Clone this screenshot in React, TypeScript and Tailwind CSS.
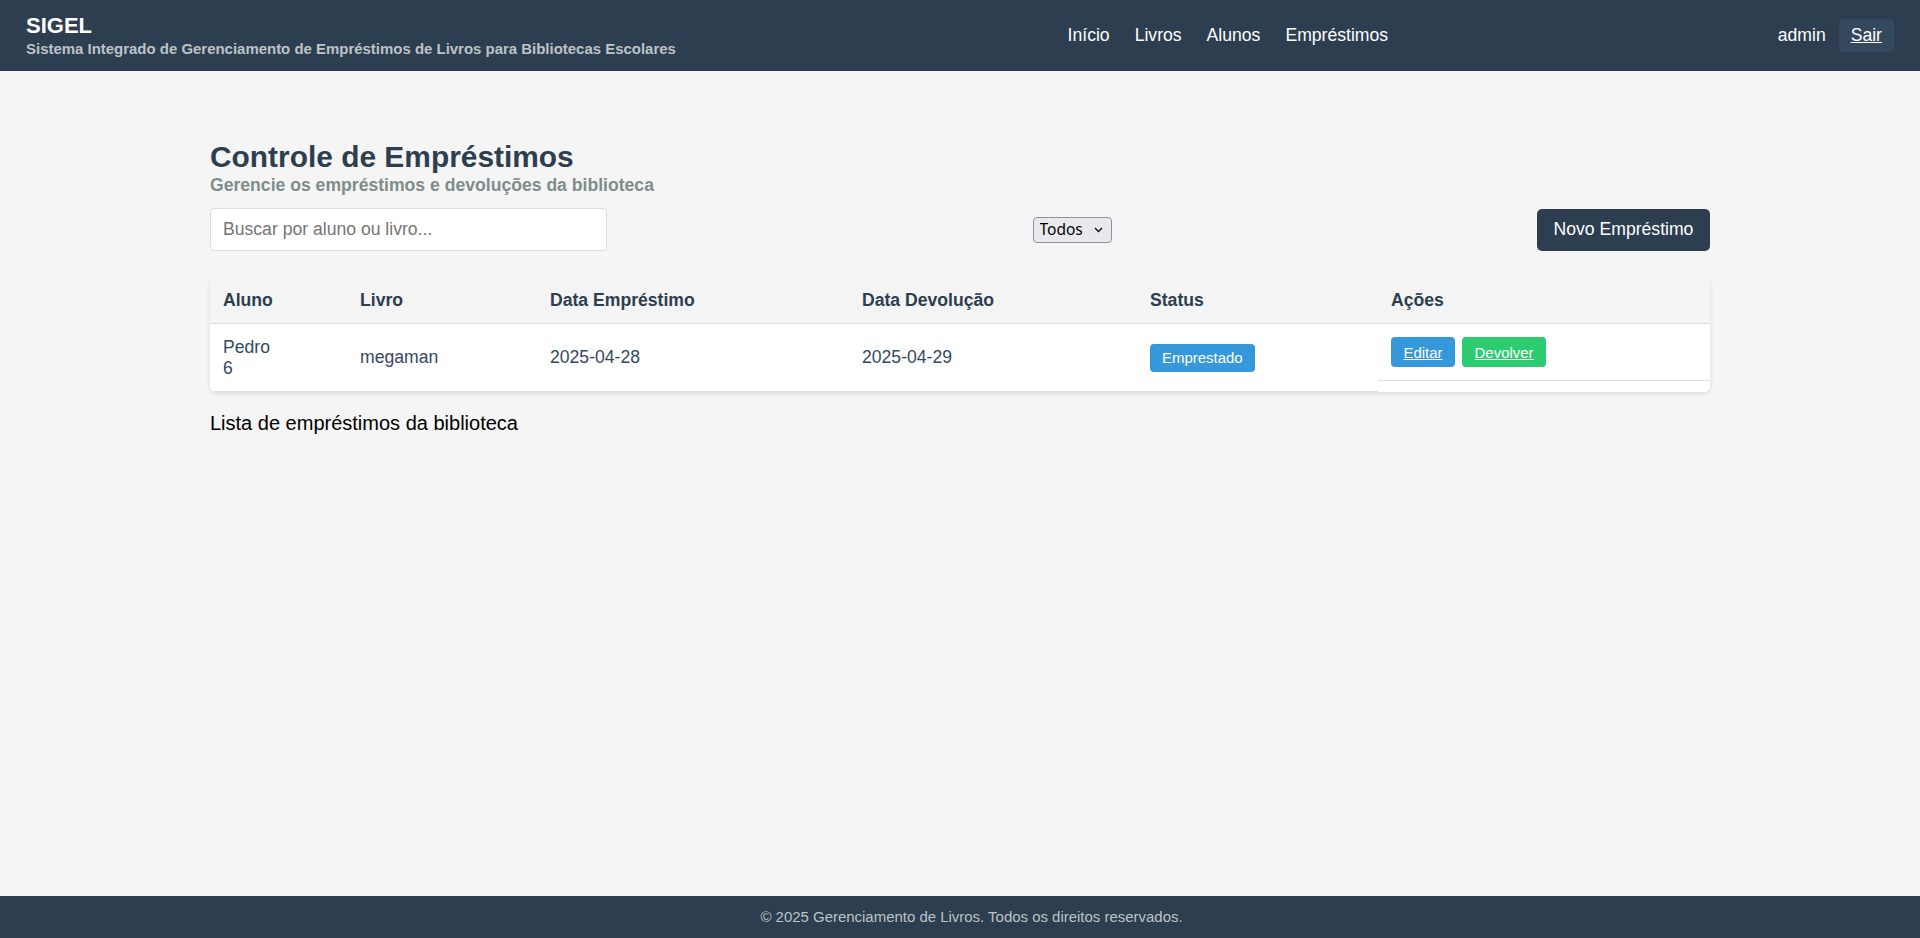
import React, { useState } from 'react';

interface Emprestimo {
  id: number;
  aluno: string;
  turma: string;
  livro: string;
  dataEmprestimo: string;
  dataDevolucao: string;
  status: string;
}

const emprestimos: Emprestimo[] = [
  {
    id: 1,
    aluno: 'Pedro',
    turma: '6',
    livro: 'megaman',
    dataEmprestimo: '2025-04-28',
    dataDevolucao: '2025-04-29',
    status: 'Emprestado',
  },
];

const Header: React.FC = () => (
  <header className="h-[71px] shrink-0 bg-[#2c3e50] px-[26px] flex items-center justify-between text-white">
    <div className="flex flex-col">
      <span className="text-[22px] leading-[26px] font-bold">SIGEL</span>
      <span className="mt-[1px] text-[14.96px] leading-[18px] font-bold text-[#bdc3c7]">
        Sistema Integrado de Gerenciamento de Empréstimos de Livros para Bibliotecas Escolares
      </span>
    </div>
    <nav className="flex items-center gap-[25px] pl-[2px] text-[17.6px] leading-[21px]">
      <a href="#">Início</a>
      <a href="#">Livros</a>
      <a href="#">Alunos</a>
      <a href="#">Empréstimos</a>
    </nav>
    <div className="flex items-center gap-[13px] text-[17.6px] leading-[21px]">
      <span>admin</span>
      <button className="h-[33px] px-[12px] rounded-[4px] bg-[#34495e] text-white underline">Sair</button>
    </div>
  </header>
);

const App: React.FC = () => {
  const [busca, setBusca] = useState('');
  const [filtro, setFiltro] = useState('todos');

  return (
    <div className="min-h-screen flex flex-col bg-[#f5f5f5] font-['Liberation_Sans',Arial,sans-serif]">
      <Header />

      <main className="flex-1 w-full">
        <div className="max-w-[1500px] mx-auto pt-[68px]">
          <h1 className="text-[29.9px] leading-[36px] font-bold text-[#2c3e50]">Controle de Empréstimos</h1>
          <p className="text-[17.6px] leading-[21px] font-bold text-[#7f8c8d]">
            Gerencie os empréstimos e devoluções da biblioteca
          </p>

          <div className="mt-[12px] flex items-center justify-between">
            <input
              value={busca}
              onChange={(e) => setBusca(e.target.value)}
              placeholder="Buscar por aluno ou livro..."
              className="w-[397px] h-[43px] px-[12px] bg-white border border-[#dddddd] rounded-[4px] text-[17.6px] text-[#333] placeholder:text-[#757575] outline-none"
            />
            <div className="relative">
              <select
                value={filtro}
                onChange={(e) => setFiltro(e.target.value)}
                className="appearance-none w-[79px] h-[26px] pl-[6px] bg-[#e9e9ed] border border-[#8f8f9d] rounded-[4px] text-[15.5px] text-black font-['Noto_Sans',sans-serif]"
              >
                <option value="todos">Todos</option>
                <option value="emprestado">Emprestado</option>
                <option value="devolvido">Devolvido</option>
              </select>
              <svg
                className="pointer-events-none absolute right-[9px] top-[10px]"
                width="9"
                height="6"
                viewBox="0 0 9 6"
                fill="none"
              >
                <path d="M1 1l3.5 3.5L8 1" stroke="#111" strokeWidth="1.4" />
              </svg>
            </div>
            <button className="w-[173px] h-[42px] rounded-[5px] bg-[#2c3e50] text-white text-[17.6px]">
              Novo Empréstimo
            </button>
          </div>

          <div className="mt-[26px] bg-white rounded-[6px] overflow-hidden shadow-[0_2px_5px_rgba(0,0,0,0.1)]">
            <table className="w-full table-fixed border-collapse text-left text-[17.6px] leading-[21px]">
              <thead className="bg-[#f4f4f4] text-[#2c3e50]">
                <tr>
                  <th className="w-[137px] px-[13px] py-[12.5px] font-bold border-b border-[#dddddd]">Aluno</th>
                  <th className="w-[190px] px-[13px] py-[12.5px] font-bold border-b border-[#dddddd]">Livro</th>
                  <th className="w-[312px] px-[13px] py-[12.5px] font-bold border-b border-[#dddddd]">Data Empréstimo</th>
                  <th className="w-[288px] px-[13px] py-[12.5px] font-bold border-b border-[#dddddd]">Data Devolução</th>
                  <th className="w-[241px] px-[13px] py-[12.5px] font-bold border-b border-[#dddddd]">Status</th>
                  <th className="px-[13px] py-[12.5px] font-bold border-b border-[#dddddd]">Ações</th>
                </tr>
              </thead>
              <tbody className="text-[#34495e]">
                {emprestimos.map((emp) => (
                  <tr key={emp.id}>
                    <td className="px-[13px] py-[12.5px] border-b border-[#dddddd]">
                      {emp.aluno}
                      <br />
                      {emp.turma}
                    </td>
                    <td className="px-[13px] py-[12.5px] border-b border-[#dddddd]">{emp.livro}</td>
                    <td className="px-[13px] py-[12.5px] border-b border-[#dddddd]">{emp.dataEmprestimo}</td>
                    <td className="px-[13px] py-[12.5px] border-b border-[#dddddd]">{emp.dataDevolucao}</td>
                    <td className="px-[13px] py-[12.5px] border-b border-[#dddddd]">
                      <span className="inline-block px-[12px] py-[5px] rounded-[4px] bg-[#3498db] text-white text-[14.96px] leading-[18px]">
                        {emp.status}
                      </span>
                    </td>
                    <td className="flex gap-[7px] px-[13px] pt-[13px] pb-[13px] border-b border-[#dddddd]">
                      <button className="h-[30px] px-[12.5px] rounded-[4px] bg-[#3498db] text-white text-[14.96px] underline">
                        Editar
                      </button>
                      <button className="h-[30px] px-[12.5px] rounded-[4px] bg-[#2ecc71] text-white text-[14.96px] underline">
                        Devolver
                      </button>
                    </td>
                  </tr>
                ))}
              </tbody>
            </table>
          </div>

          <p className="mt-[20px] text-[20px] leading-[23px] text-black">Lista de empréstimos da biblioteca</p>
        </div>
      </main>

      <footer className="h-[42px] shrink-0 bg-[#2c3e50] flex items-center justify-center pl-[23px] text-[14.96px] text-[#bdc3c7]">
        © 2025 Gerenciamento de Livros. Todos os direitos reservados.
      </footer>
    </div>
  );
};

export default App;
